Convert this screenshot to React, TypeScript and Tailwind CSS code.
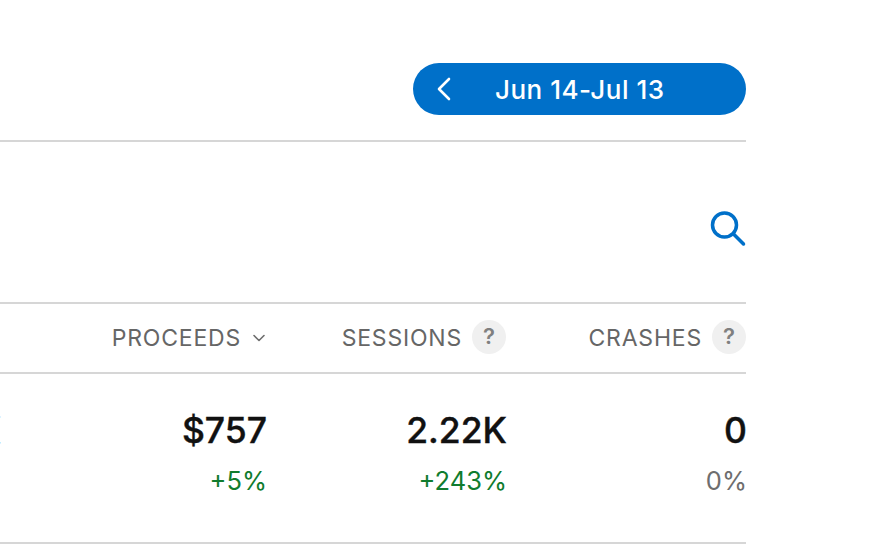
const columns = [
  { label: "PROCEEDS", value: "$757", change: "+5%", tone: "text-[#107c2e]", width: "w-[265px]", sort: true },
  { label: "SESSIONS", value: "2.22K", change: "+243%", tone: "text-[#107c2e]", width: "w-[240px]", help: true },
  { label: "CRASHES", value: "0", change: "0%", tone: "text-[#6e6e6e]", width: "w-[240px]", help: true },
];

function HelpBadge() {
  return (
    <span className="mt-[-3px] ml-[10px] flex h-[34px] w-[34px] items-center justify-center rounded-full bg-[#f0f0f0] text-[22px] font-semibold text-[#808080]">
      ?
    </span>
  );
}

export default function App() {
  return (
    <div className="h-[556px] w-[894px] overflow-hidden bg-white font-['Inter',sans-serif]">
      <div className="w-[746px]">
        <div className="flex h-[140px] justify-end pt-[63px]">
          <button className="flex h-[52px] w-[333px] items-center rounded-[26px] bg-[#0070c9] pl-[24px] text-white">
            <svg width="14" height="24" viewBox="0 0 14 24" fill="none" stroke="currentColor" strokeWidth="2.6" strokeLinecap="round" strokeLinejoin="round">
              <path d="M12 2L2 12l10 10" />
            </svg>
            <span className="mt-[1px] ml-[44px] text-[26px] font-medium leading-none tracking-[0.5px]">Jun 14-Jul 13</span>
          </button>
        </div>
        <div className="flex h-[164px] items-end justify-end border-y-2 border-[#d6d6d6] pb-[55px]">
          <svg width="36" height="36" viewBox="0 0 36 36" fill="none" stroke="#0070c9" strokeWidth="3.5" strokeLinecap="round">
            <circle cx="14.5" cy="14" r="12" />
            <path d="M24 23.5l9.5 9.5" />
          </svg>
        </div>
        <div className="flex h-[70px] items-center justify-end border-b-2 border-[#d6d6d6]">
          {columns.map((col) => (
            <div key={col.label} className={`flex items-center justify-end ${col.width}`}>
              <span className="text-[23px] tracking-[0.8px] text-[#666666]">{col.label}</span>
              {col.sort && (
                <svg width="14" height="10" viewBox="0 0 14 10" fill="none" stroke="#6e6e6e" strokeWidth="1.6" strokeLinecap="round" strokeLinejoin="round" className="ml-[11px]">
                  <path d="M2 2.5l5 5 5-5" />
                </svg>
              )}
              {col.help && <HelpBadge />}
            </div>
          ))}
        </div>
        <div className="flex h-[170px] justify-end border-b-2 border-[#d6d6d6] pt-[36px]">
          {/* previous column runs off the left edge, only its last pixels show */}
          <div className="w-[99px] shrink-0 text-right">
            <div className="text-[35.5px] leading-[42px] font-medium text-[#111111] [-webkit-text-stroke:0.4px_#111111]">K</div>
            <div className="mt-[14px] text-[25.5px] leading-[30px] text-[#107c2e]">%</div>
          </div>
          {columns.map((col) => (
            <div key={col.label} className={`shrink-0 text-right ${col.width}`}>
              <div className="mr-[-1px] text-[35.5px] leading-[42px] font-medium text-[#111111] [-webkit-text-stroke:0.4px_#111111]">{col.value}</div>
              <div className={`mt-[14px] mr-[-1px] text-[25.5px] leading-[30px] ${col.tone}`}>{col.change}</div>
            </div>
          ))}
        </div>
      </div>
    </div>
  );
}
